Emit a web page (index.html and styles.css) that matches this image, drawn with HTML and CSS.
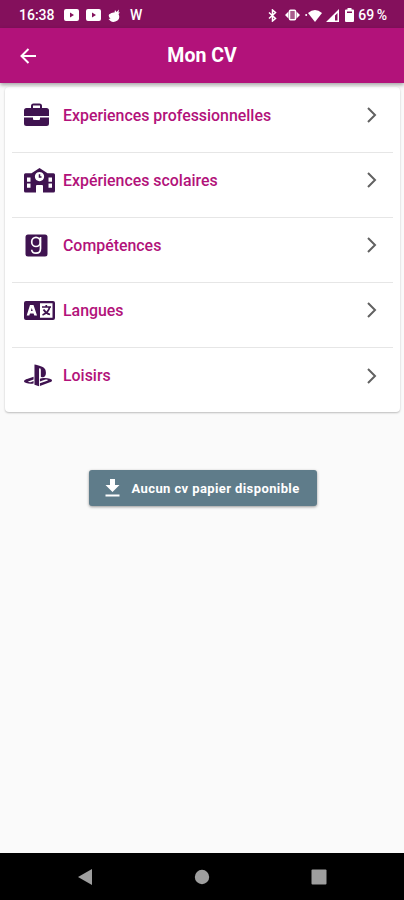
FILE: index.html
```html
<!DOCTYPE html>
<html lang="fr">
<head>
    <meta charset="UTF-8">
    <meta name="viewport" content="width=device-width, initial-scale=1.0">
    <title>Mon CV</title>
    <link rel="stylesheet" href="styles.css">
</head>
<body>

    <div class="status-bar">
        <span class="time">16:38</span>
        <svg class="youtube" width="15" height="12" viewBox="0 0 15 12"><path fill-rule="evenodd" d="M2 0h11q2 0 2 2v8q0 2-2 2H2q-2 0-2-2V2q0-2 2-2zM6 3.500v5L10 6z"/></svg>
        <svg class="youtube" width="15" height="12" viewBox="0 0 15 12"><path fill-rule="evenodd" d="M2 0h11q2 0 2 2v8q0 2-2 2H2q-2 0-2-2V2q0-2 2-2zM6 3.500v5L10 6z"/></svg>
        <svg class="bird" width="13" height="13" viewBox="0 0 13 13"><path d="M1 5.500Q4 3 6.500 3.500L7 1l1.500 2L11 .5l-.5 3H12l-1.500 1.500q2 4-1 6.500-4 2.500-7 .5L.5 10l2-.5Q0 8 1 5.500z"/></svg>
        <span class="app-letter">W</span>
        <div class="status-right">
            <svg class="bluetooth" width="9" height="13" viewBox="0 0 9 13"><path d="M1 3.500l6.500 6L4.500 12V1l3 2.500L1 9.500" fill="none" stroke="#fff" stroke-width="1.500"/></svg>
            <svg class="vibrate" width="15" height="12" viewBox="0 0 15 12"><rect x="4.500" y="1.200" width="6" height="9.600" rx="1" fill="#a85a8c" stroke="#fff" stroke-width="1.500"/><path d="M3.500 2.500L0 6l3.500 3.500zM11.500 2.500L15 6l-3.500 3.500z"/></svg>
            <svg class="wifi" width="17" height="13" viewBox="0 0 17 13"><path d="M3 4q7-6 14 0l-7 9z"/><circle cx="1.200" cy="6" r="1"/></svg>
            <svg class="signal" width="13" height="13" viewBox="0 0 13 13"><path fill-rule="evenodd" d="M13 0v13H0zM11.500 4L9 6.500v5h2.500z"/></svg>
            <svg class="battery" width="9" height="14" viewBox="0 0 9 14"><path fill-rule="evenodd" d="M2.500 0h4v1.500H8q1 0 1 1V13q0 1-1 1H1q-1 0-1-1V2.500q0-1 1-1h1.500zM2 3.500V5h5V3.500z"/></svg>
            <span class="percent">69 %</span>
        </div>
    </div>

    <header class="app-bar">
        <svg class="back" width="16" height="16" viewBox="0 0 16 16"><path d="M16 8H1.500M8.500 1L1.500 8l7 7" fill="none" stroke="#fff" stroke-width="2"/></svg>
        <h1>Mon CV</h1>
    </header>

    <main>
        <div class="card">
            <div class="row">
                <div class="icon"><svg width="25" height="25" viewBox="0 0 25 25"><path fill-rule="evenodd" d="M7 5V3q0-2.500 2.500-2.500h6Q18 .5 18 3v2h4.500Q25 5 25 7.500V13H0V7.500Q0 5 2.500 5zM9 5h7V2.500H9zM0 14.500h9V16q0 1 1 1h5q1 0 1-1v-1.500h9v6q0 2.500-2.500 2.500h-20Q0 23 0 20.500z"/></svg></div>
                <span class="label">Experiences professionnelles</span>
                <svg class="chevron" width="10" height="16" viewBox="0 0 10 16"><path d="M1 1l7 7-7 7"/></svg>
            </div>
            <div class="row">
                <div class="icon"><svg width="31" height="25" viewBox="0 0 31 25"><path fill-rule="evenodd" d="M15.500 0l8 5.200H29.500q1.500 0 1.500 1.500V23q0 1.500-1.500 1.500H19V18q0-1-1-1h-5q-1 0-1 1v6.500H1.500Q0 24.500 0 23V6.700q0-1.500 1.500-1.500H7.500zM15.500 4a4.600 4.600 0 1 0 .01 0zM3 9.500v4.200h3.500V9.500zM3 15.500v4.200h3.500V15.500zM24.500 9.500v4.200H28V9.500zM24.500 15.500v4.200H28V15.500z"/><path d="M15.500 6.300v2.600h2" fill="none" stroke="#3f1350" stroke-width="1.500"/></svg></div>
                <span class="label">Expériences scolaires</span>
                <svg class="chevron" width="10" height="16" viewBox="0 0 10 16"><path d="M1 1l7 7-7 7"/></svg>
            </div>
            <div class="row">
                <div class="icon"><svg width="25" height="25" viewBox="0 0 25 25"><rect x="1.500" y="1.500" width="22" height="22" rx="2.500"/><g fill="none" stroke="#fff" stroke-width="1.700"><ellipse cx="12" cy="8.900" rx="4.300" ry="4.600"/><path d="M16.500 4v11.500q0 4.700-4.500 4.700-4 0-4.300-3.500"/></g></svg></div>
                <span class="label">Compétences</span>
                <svg class="chevron" width="10" height="16" viewBox="0 0 10 16"><path d="M1 1l7 7-7 7"/></svg>
            </div>
            <div class="row">
                <div class="icon"><svg width="31" height="25" viewBox="0 0 31 25"><rect y="3" width="31" height="19" rx="2"/><path fill="#fff" fill-rule="evenodd" d="M6 7h3.500l3.500 10.500h-2.700l-.7-2H6l-.7 2H2.700zM7.800 10L6.900 13h1.800zM16 5.300h12.500v14.400H16z"/><path d="M18 9h9M22.300 7v2M25.500 9.500q-1 5-7 7.500M19.500 11.500q2.500 4 6.500 5" fill="none" stroke="#3f1350" stroke-width="1.700"/></svg></div>
                <span class="label">Langues</span>
                <svg class="chevron" width="10" height="16" viewBox="0 0 10 16"><path d="M1 1l7 7-7 7"/></svg>
            </div>
            <div class="row">
                <div class="icon"><svg width="28" height="25" viewBox="0 0 576 512"><path d="M570.900 372.300c-11.300 14.200-38.800 24.300-38.800 24.300L327 470.200v-54.300l150.900-53.800c17.100-6.100 19.800-14.800 5.800-19.400-13.900-4.600-39.100-3.300-56.200 2.900L327 381.100v-56.400c23.200-7.800 47.100-13.600 75.700-16.800 40.900-4.500 90.900.6 130.200 15.500 44.200 14 49.200 34.700 38 48.900zm-224.400-92.500v-139c0-16.300-3-31.300-18.300-35.600-11.700-3.800-19 7.100-19 23.400v347.900l-93.800-29.800V32c39.900 7.400 98 24.900 129.200 35.400C424.100 94.700 451 128.700 451 205.200c0 74.500-46 102.800-104.500 74.600zM43.200 410.200c-45.400-12.800-53-39.500-32.300-54.800 19.100-14.200 51.700-24.900 51.700-24.900l134.500-47.800v54.500l-96.800 34.600c-17.100 6.100-19.700 14.800-5.800 19.400 13.900 4.600 39.100 3.300 56.200-2.900l46.400-16.900v48.800c-51.600 9.300-101.400 7.300-153.900-10z"/></svg></div>
                <span class="label">Loisirs</span>
                <svg class="chevron" width="10" height="16" viewBox="0 0 10 16"><path d="M1 1l7 7-7 7"/></svg>
            </div>
        </div>

        <button class="download">
            <svg width="15" height="18" viewBox="0 0 15 18"><path d="M5 0h5v6h4.500l-7 7-7-7H5zM.5 15.500h14v2H.5z"/></svg>
            <span>Aucun cv papier disponible</span>
        </button>
    </main>

    <nav class="nav-bar">
        <svg width="16" height="16" viewBox="0 0 16 16"><path d="M15 0v16L1 8z"/></svg>
        <svg width="16" height="16" viewBox="0 0 16 16"><circle cx="8" cy="8" r="7.200"/></svg>
        <svg width="16" height="16" viewBox="0 0 16 16"><rect x=".5" y=".5" width="15" height="15" rx="1"/></svg>
    </nav>

</body>
</html>
```
FILE: styles.css
```css
* {
    box-sizing: border-box;
}
body {
    font-family: Roboto, sans-serif;
    margin: 0;
    height: 900px;
    display: flex;
    flex-direction: column;
    background-color: #fafafa;
}
svg {
    display: block;
    flex: none;
}
.status-bar {
    height: 28px;
    padding: 2px 17px 0 19px;
    display: flex;
    align-items: center;
    background-color: #84105c;
    color: white;
    fill: white;
    font-size: 14px;
    font-weight: 500;
    white-space: nowrap;
}
.time {
    width: 45px;
}
.youtube {
    margin-right: 7px;
}
.bird {
    margin-right: 9px;
}
.app-letter {
    font-size: 14px;
}
.status-right {
    display: flex;
    align-items: center;
    margin-left: auto;
}
.bluetooth {
    margin-right: 8px;
}
.vibrate {
    margin-right: 5px;
}
.wifi {
    margin-right: 4px;
}
.signal {
    margin-right: 6px;
}
.battery {
    margin-right: 4px;
}
.percent {
    word-spacing: -1px;
}
.app-bar {
    position: relative;
    height: 55px;
    padding: 0 20px;
    display: flex;
    align-items: center;
    background-color: #b2127a;
    box-shadow: 0 2px 4px rgba(0, 0, 0, 0.35);
}
.app-bar h1 {
    flex: 1;
    margin: 0 16px 0 0;
    text-align: center;
    color: white;
    font-size: 19.5px;
    font-weight: 700;
}
main {
    flex: 1;
    padding: 4px 4px 0 5px;
}
.card {
    height: 325px;
    padding: 1px 7px 0;
    background-color: white;
    border-radius: 4px;
    box-shadow: 0 1px 2px rgba(0, 0, 0, 0.25);
}
.row {
    height: 65px;
    padding: 0 16px 10px 12px;
    display: flex;
    align-items: center;
    border-bottom: 1px solid #e6e6e6;
}
.row:last-child {
    border-bottom: none;
}
.icon {
    width: 39px;
    fill: #3f1350;
}
.label {
    color: #b2127a;
    font-size: 15.9px;
    font-weight: 500;
}
.chevron {
    margin-left: auto;
    fill: none;
    stroke: #616161;
    stroke-width: 2;
}
.download {
    width: 228px;
    height: 36px;
    margin: 58px auto 0;
    padding: 0 16px;
    display: flex;
    align-items: center;
    gap: 12px;
    background-color: #5f7c8a;
    color: white;
    fill: white;
    border: none;
    border-radius: 3px;
    box-shadow: 0 1px 3px rgba(0, 0, 0, 0.4);
    font-family: inherit;
    font-size: 13px;
    font-weight: 700;
    letter-spacing: 0.4px;
    white-space: nowrap;
}
.nav-bar {
    height: 47px;
    padding: 0 77px;
    display: flex;
    align-items: center;
    justify-content: space-between;
    background-color: black;
    fill: #9e9e9e;
}
```
